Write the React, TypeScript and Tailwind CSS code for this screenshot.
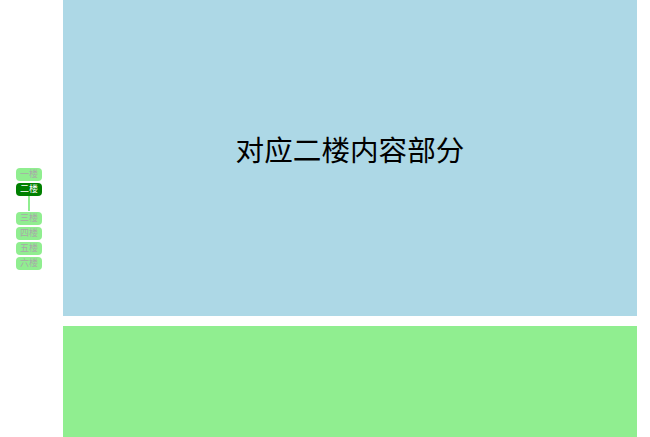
import React from "react";

const floors = ["一楼", "二楼", "三楼", "四楼", "五楼", "六楼"];

export default function App() {
  const active = 1;
  return (
    <div
      className="relative w-[650px] h-[437px] overflow-hidden bg-white"
      style={{ fontFamily: '"Liberation Sans", "Noto Sans CJK SC", sans-serif' }}
    >
      <div className="absolute left-[16px] top-[168px] flex flex-col w-[26px]">
        {floors.map((f, i) => (
          <React.Fragment key={f}>
            <div
              className={
                "h-[13px] mb-[2px] rounded-[4px] flex items-center justify-center text-[9px] leading-none " +
                (i === active ? "bg-[#008000] text-white" : "bg-[#90ee90] text-[#a8a8a8]")
              }
            >
              {f}
            </div>
            {i === active && (
              <div className="h-[15px] -mt-[2px] mb-[1px] flex justify-center">
                <div className="w-[2px] h-full bg-[#90ee90]" />
              </div>
            )}
          </React.Fragment>
        ))}
      </div>
      <div className="ml-[63px] w-[574px] flex flex-col gap-[10px]">
        <div className="h-[316px] bg-[#add8e6] flex items-center justify-center pb-[14px]">
          <span className="text-[28.6px] text-black leading-none">对应二楼内容部分</span>
        </div>
        <div className="h-[316px] bg-[#90ee90]" />
      </div>
    </div>
  );
}
